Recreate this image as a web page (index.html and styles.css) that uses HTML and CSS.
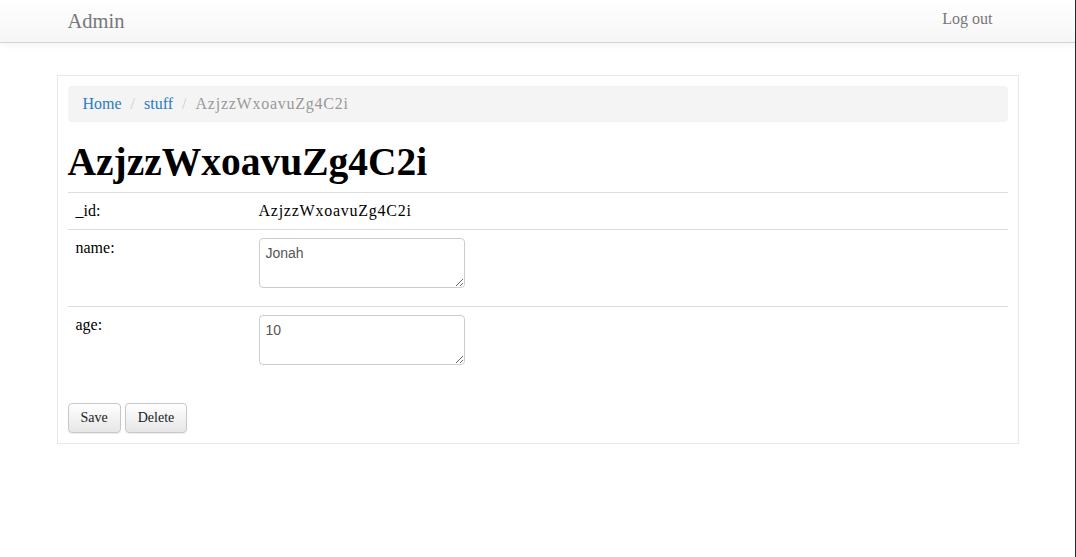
FILE: index.html
```html
<!DOCTYPE html>
<html>
<head>
<meta charset="utf-8">
<title>Admin</title>
<link rel="stylesheet" href="styles.css">
</head>
<body>
<div class="page">
  <nav class="navbar">
    <div class="container nav-inner">
      <a class="brand" href="#">Admin</a>
      <a class="nav-link" href="#">Log out</a>
    </div>
  </nav>
  <div class="container">
    <div class="panel">
      <ol class="breadcrumb">
        <li><a href="#">Home</a></li>
        <li class="sep">/</li>
        <li><a href="#">stuff</a></li>
        <li class="sep">/</li>
        <li class="active ident">AzjzzWxoavuZg4C2i</li>
      </ol>
      <h1 class="title">AzjzzWxoavuZg4C2i</h1>
      <table class="fields">
        <tr>
          <td class="label">_id:</td>
          <td class="ident">AzjzzWxoavuZg4C2i</td>
        </tr>
        <tr>
          <td class="label">name:</td>
          <td><textarea class="field">Jonah</textarea></td>
        </tr>
        <tr>
          <td class="label">age:</td>
          <td><textarea class="field">10</textarea></td>
        </tr>
      </table>
      <div class="actions">
        <button class="btn">Save</button>
        <button class="btn">Delete</button>
      </div>
    </div>
  </div>
</div>
</body>
</html>
```
FILE: styles.css
```css
html, body {
  margin: 0;
  padding: 0;
  background: #fff;
}
body {
  font-family: "Liberation Serif", "Times New Roman", serif;
  font-size: 16px;
  line-height: 20px;
  color: #000;
}
.page {
  min-height: 557px;
  border-right: 1px solid #0b3b2f;
  box-sizing: border-box;
}
.container {
  width: 940px;
  margin: 0 auto;
}
.navbar {
  height: 42px;
  background: linear-gradient(to bottom, #ffffff 0%, #f6f6f6 100%);
  border-bottom: 1px solid #d4d4d4;
  box-shadow: 0 1px 8px rgba(0, 0, 0, 0.06);
  margin-bottom: 32px;
}
.nav-inner {
  display: flex;
  justify-content: space-between;
  align-items: center;
  height: 42px;
}
.brand {
  font-size: 20.5px;
  color: #777;
  text-decoration: none;
  margin-top: -1px;
}
.nav-link {
  font-size: 16px;
  color: #777;
  text-decoration: none;
  margin-right: 15px;
  margin-top: -4px;
}
.panel {
  border: 1px solid #e8e8e8;
  padding: 10px;
  margin: 0 -11px;
}
.breadcrumb {
  list-style: none;
  margin: 0 0 20px;
  padding: 8px 15px;
  background: #f4f4f4;
  border-radius: 4px;
  display: flex;
  font-size: 16px;
}
.breadcrumb a {
  color: #2a7cc1;
  text-decoration: none;
}
.breadcrumb .sep {
  color: #ccc;
  padding: 0 9px;
}
.breadcrumb .active {
  color: #999;
}
.ident {
  letter-spacing: 0.75px;
}
.title {
  font-size: 39.5px;
  line-height: 40px;
  font-weight: bold;
  margin: 0 0 10px;
}
.fields {
  width: 100%;
  border-collapse: collapse;
  table-layout: fixed;
  margin-bottom: 20px;
}
.fields td {
  border-top: 1px solid #ddd;
  padding: 8px;
  vertical-align: top;
}
.fields td.label {
  width: 167px;
}
.field {
  display: block;
  box-sizing: border-box;
  width: 206px;
  height: 50px;
  margin: 0 0 10px;
  padding: 4px 6px;
  border: 1px solid #ccc;
  border-radius: 4px;
  font-family: "Liberation Sans", Arial, sans-serif;
  font-size: 14px;
  line-height: 20px;
  color: #555;
  resize: vertical;
}
.actions {
  display: flex;
  gap: 4px;
}
.btn {
  height: 30px;
  padding: 0 12px;
  font-family: "Liberation Serif", "Times New Roman", serif;
  font-size: 14px;
  color: #222;
  background: linear-gradient(to bottom, #ffffff 0%, #e6e6e6 100%);
  border: 1px solid #c8c8c8;
  border-radius: 4px;
  box-shadow: 0 1px 1px rgba(0, 0, 0, 0.08);
}
```
